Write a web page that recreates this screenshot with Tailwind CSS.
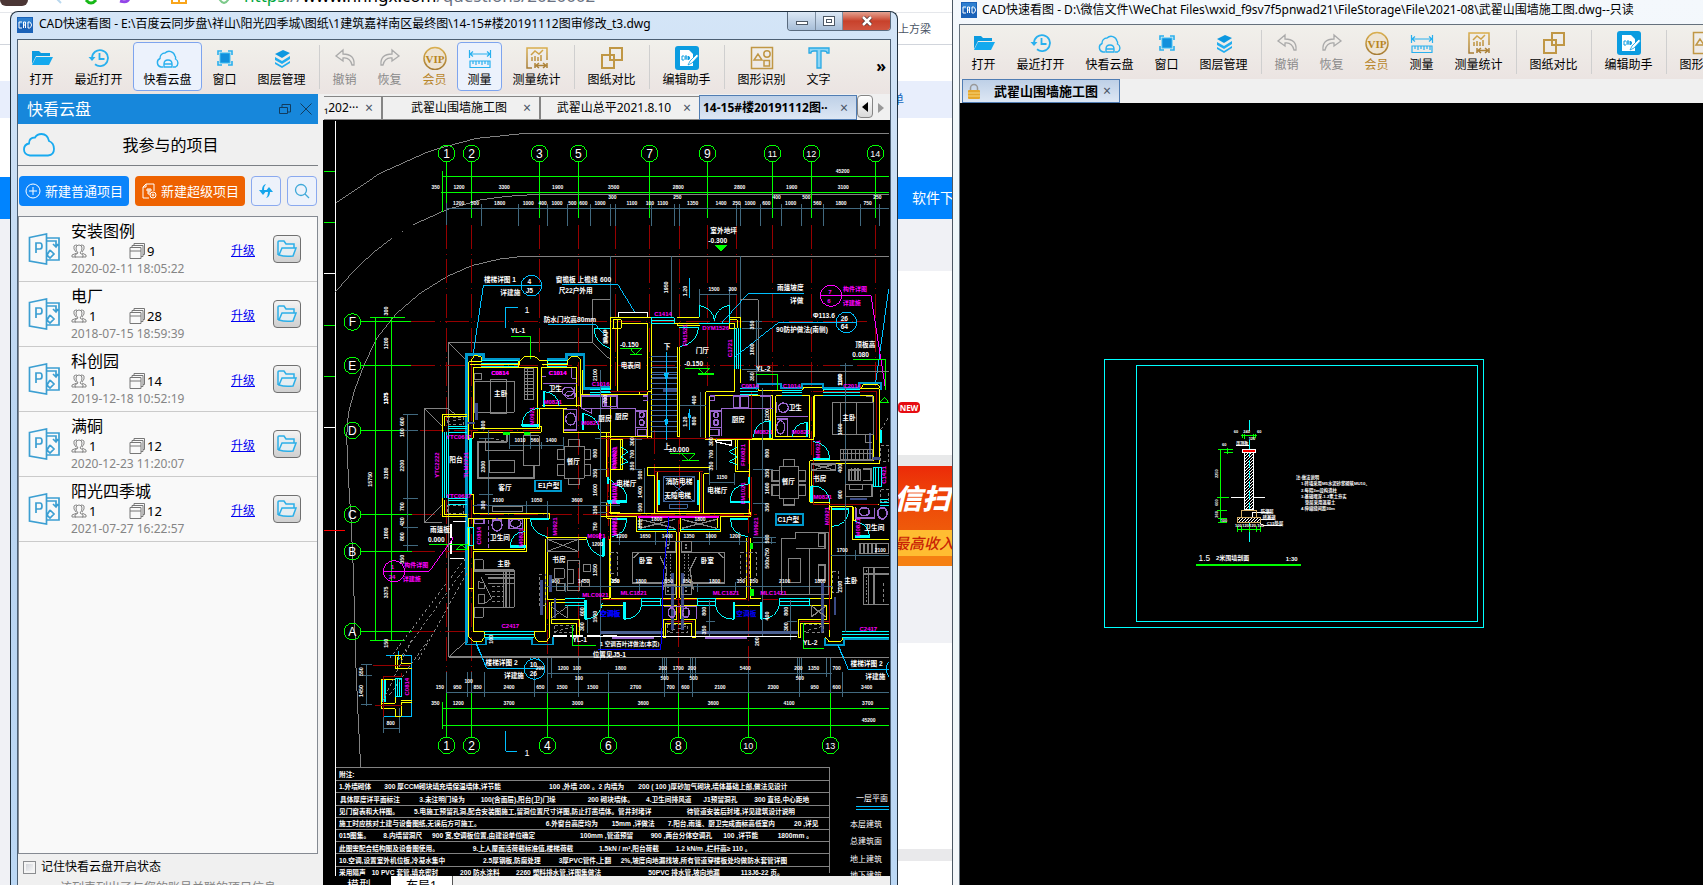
<!DOCTYPE html>
<html lang="zh-CN">
<head>
<meta charset="utf-8">
<title>CAD快速看图</title>
<script src="https://cdn.jsdelivr.net/npm/@tailwindcss/browser@4"></script>
</head>
<body class="relative h-screen overflow-hidden bg-white font-['Noto_Sans','Noto_Sans_CJK_SC',sans-serif] text-xs leading-4 text-black">

<!-- Shared icons -->
<svg class="absolute size-0" aria-hidden="true">
  <defs>
    <linearGradient id="gold" x1="0" y1="0" x2="0" y2="1"><stop offset="0" stop-color="#d9ae4e"/><stop offset="1" stop-color="#a67c35"/></linearGradient>
    <symbol id="i-app" viewBox="0 0 16 16"><rect width="16" height="16" fill="#1a62b8"/><rect x="1" y="1" width="14" height="6" fill="#2d7fd0"/><path d="M5 5H2v6h3M6.500 11V5h2v6M6.500 8h2M11 11V5h1.500q2 1 2 3t-2 3z" fill="none" stroke="#fff"/></symbol>
    <symbol id="i-open" viewBox="0 0 24 24"><path d="M2 18V5h7l2 2h9v3H6z" fill="#0c9be0"/><path d="m6 11h17l-4 8H2z" fill="#14a9ee"/></symbol>
    <symbol id="i-recent" viewBox="0 0 24 24"><path d="M5 12a8 8 0 1 1 3 6.300M12.500 7v6h5" fill="none" stroke="#29b0ee" stroke-width="1.800"/><path d="M1.500 11h7L5 15z" fill="#29b0ee"/></symbol>
    <symbol id="i-cloudp" viewBox="0 0 24 24"><path d="M7 21H5a4.500 4.500 0 0 1-1-8.500 5 5 0 0 1 5-5.500 6 6 0 0 1 10 3q1 1 .500 3a4.500 4.500 0 0 1 0 8h-2.500M8 21v-3q0-4 4-4t4 4v3zM8 18h8" fill="none" stroke="#29b0ee" stroke-width="1.400"/></symbol>
    <symbol id="i-win" viewBox="0 0 24 24"><rect x="7" y="7" width="10" height="10" fill="#1290dc" stroke="#41c0f5"/><path d="M5 9V5h4M15 5h4v4M19 15v4h-4M9 19H5v-4" fill="none" stroke="#29b0ee" stroke-width="1.600"/></symbol>
    <symbol id="i-layer" viewBox="0 0 24 24"><path d="m5 8 8-4 7 3-8 5z" fill="#0c98e0"/><path d="m5 11 7 4 8-5v3l-8 5-7-4zm0 5 7 4 8-5v2l-8 5-7-4z" fill="#21adf0"/></symbol>
    <symbol id="i-undo" viewBox="0 0 24 24"><path d="m10 4-7 6 7 5v-3q7-1 9 7h2q1-11-11-11z" fill="none" stroke="#aaa" stroke-width="1.300"/></symbol>
    <symbol id="i-redo" viewBox="0 0 24 24"><path d="m14 4 7 6-7 5v-3q-7-1-9 7H3q-1-11 11-11z" fill="none" stroke="#aaa" stroke-width="1.300"/></symbol>
    <symbol id="i-vip" viewBox="0 0 24 24"><circle cx="12" cy="12.500" r="11" fill="#eee4d3" stroke="url(#gold)" stroke-width="1.500"/><text x="12" y="16.500" text-anchor="middle" font-family="Liberation Serif" font-weight="bold" font-size="11" fill="#b8851f">VIP</text></symbol>
    <symbol id="i-measure" viewBox="0 0 24 24"><path d="M1.500 4v8M22.500 4v8M2 8h20M5 5.500 2 8l3 2.500M19 5.500 22 8l-3 2.500M2 15h20v6.500H2zM5 15v3M8 15v4M11 15v3M14 15v4M17 15v3M20 15v4" fill="none" stroke="#29b0ee" stroke-width="1.200"/></symbol>
    <symbol id="i-stat" viewBox="0 0 24 24"><path d="M7 22H2V2h20v12M6 9l4-4 4 3 4-4M7 15v-4M10 15v-5M13 15v-4M16 15V9M10 17v5M22 17v5M11 19.500h10M14 17l-3 2.500L14 22M18 17l3 2.500L18 22" fill="none" stroke="url(#gold)" stroke-width="1.500"/></symbol>
    <symbol id="i-cmp" viewBox="0 0 24 24"><path d="M10 2h12v12H10zM2 9h12v13H2z" fill="none" stroke="#c09745" stroke-width="2"/></symbol>
    <symbol id="i-edit" viewBox="0 0 24 24"><rect width="24" height="24" rx="3" fill="#0b9ce0"/><path d="M5 4h9l4 4v12H5z" fill="#fff"/><path d="M9 10H7v4h2M10 14v-4h2v4M10 12h2M13.500 10v4q2.500-2 0-4" fill="none" stroke="#0b9ce0"/><path d="m13 19 2-4 7-7 1.500 2-6.500 7z" fill="#fff" stroke="#0b9ce0" stroke-width=".8"/></symbol>
    <symbol id="i-shape" viewBox="0 0 24 24"><path d="M1.500 1.500h21v21h-21zM8 8l-4 6h8zM14 14.500h5.500V20H14z" fill="none" stroke="#c09745" stroke-width="1.500"/><circle cx="17" cy="8" r="3.200" fill="none" stroke="#c09745" stroke-width="1.500"/></symbol>
    <symbol id="i-text" viewBox="0 0 24 24"><path d="M2 2h20v5h-2q0-2-3-2h-3v17h-4V5H7Q4 5 4 7H2z" fill="#8dd5f5" stroke="#29a9e4" stroke-width="1.300"/></symbol>
    <symbol id="i-proj" viewBox="0 0 32 32"><path d="M19 5h12v22H19M1.500 4.500 18.500 1v30L1.500 28zM8 20V10h4q2 0 2 3t-2 3H8M19 8h9v6m-3-3 3 3 2-3M22 17l4 4-4 4-3-3 3-5" fill="none" stroke="#3c9fd2" stroke-width="1.700"/></symbol>
    <symbol id="i-people" viewBox="0 0 16 14"><path d="M6 9 1 11v2h4M5 8Q2 5 3 2q1-1 3-1M11 9l4 2v2h-4M11 8q3-3 2-6-1-1-3-1M8 1q-3 0-3 3t2 5l-3 2v2h8v-2L9 9q2-2 2-5T8 1z" fill="none" stroke="#858585"/></symbol>
    <symbol id="i-docs" viewBox="0 0 16 16"><path d="M1 4.500h11v11H1zM1 8h11M3 4V2.500h11v11h-2M5 2V.500h10.500v11H14" fill="none" stroke="#777"/></symbol>
    <symbol id="i-folder" viewBox="0 0 20 18"><path d="M1 15V2q0-1 1-1h5l2 3h8v4M5 8h14l-3 8q-8 1-14-1z" fill="#e6eef2" stroke="#2cafe8" stroke-width="1.500"/></symbol>
  </defs>
</svg>

<!-- Browser page behind both windows -->
<div class="absolute inset-0 flex flex-col" aria-label="浏览器">
  <div class="flex h-[13px] shrink-0 items-start gap-5 overflow-hidden border-b border-gray-200 bg-white">
    <span class="h-1.5 w-7 rounded-b-full bg-[#4b3635]"></span>
    <svg class="ml-1 h-1.5 w-24 shrink-0" viewBox="0 0 96 6"><path d="M3-3l6 6" stroke="#b9d8ef" stroke-width="2"/><path d="M34 0q5 6 10 0" fill="none" stroke="#17b817" stroke-width="3"/><path d="M68 1q10 3 9-6" fill="none" stroke="#9345e8" stroke-width="3"/></svg>
    <svg class="-ml-2 h-1.5 w-8 shrink-0" viewBox="0 0 32 6"><path d="M12 0v3h14V0M19 0v3" fill="none" stroke="#f9a51b" stroke-width="2"/></svg>
    <svg class="-mr-4 h-1.5 w-6 shrink-0" viewBox="0 0 24 6"><path d="M6-4q2 6 6 7 4-1 6-7" fill="none" stroke="#7cc98a" stroke-width="2"/></svg>
    <span class="-mt-3 ml-1 text-[17px] leading-4 text-gray-500"><span class="text-green-600">https</span>://<span class="text-black">www.hnngx.com</span>/questions/2020002</span>
  </div>
  <div class="flex h-8 shrink-0 items-center border-b border-gray-300 bg-white pl-[898px] text-[11px] text-gray-600">上方梁</div>
  <div class="h-9 shrink-0"></div>
  <div class="flex h-[37px] shrink-0 items-center bg-[#e8eefc] pl-[892px] text-[#1667bd]">单</div>
  <div class="h-[59px] shrink-0"></div>
  <div class="flex h-[42px] shrink-0 items-center bg-[#0084ff] pl-[912px] text-sm text-white">软件下</div>
  <div class="flex min-h-0 flex-1 bg-[#f0f1f5] pl-[898px]">
    <div class="flex w-14 flex-col">
      <div class="h-[52px] shrink-0"></div>
      <div class="flex h-[184px] shrink-0 items-end bg-white pb-[42px]"><span class="h-[11px] w-[22px] rounded-sm bg-[#e60c12] text-center text-[8px] leading-[11px] font-bold text-white">NEW</span></div>
      <div class="h-[11px] shrink-0 bg-[#e8e9ea]"></div>
      <div class="flex h-16 shrink-0 items-center overflow-hidden whitespace-nowrap bg-linear-to-b from-[#ec2a08] to-[#ef5a0a] text-[28px] leading-8 font-black text-white italic"><span class="-ml-1">信扫</span></div>
      <div class="flex h-[26px] shrink-0 items-center overflow-hidden whitespace-nowrap bg-[#ffbd32] text-[15px] font-medium text-[#c92305] italic"><span class="-ml-1">最高收入</span></div>
      <div class="h-[10px] shrink-0 bg-[#f58012]"></div>
      <div class="h-[77px] shrink-0"></div>
      <div class="h-[206px] shrink-0 bg-white"></div>
      <div class="h-3 shrink-0 bg-[#e9e9eb]"></div>
      <div class="flex-1 bg-white"></div>
    </div>
  </div>
</div>

<!-- Left application window -->
<main class="absolute top-[11px] bottom-0 left-[10px] flex w-[888px] flex-col rounded-t-lg border-x border-t border-[#20303f] bg-linear-to-b from-[#d4e5f7] via-[#b9d4f1] to-[#bcd8f5] px-[6px]">
  <header class="flex h-[27px] shrink-0 items-start">
    <svg class="mt-[5px] size-4 shrink-0"><use href="#i-app"/></svg>
    <h1 class="ml-[6px] mt-1 min-w-0 flex-1 truncate leading-4">CAD快速看图 - E:\百度云同步盘\祥山\阳光四季城\图纸\1建筑嘉祥南区最终图\14-15#楼20191112图审修改_t3.dwg</h1>
    <div class="flex h-[19px] overflow-hidden rounded-b border-x border-b border-[#5a6b7e]">
      <button aria-label="最小化" class="flex w-7 items-center justify-center border-r border-[#7d8ea1] bg-linear-to-b from-[#dce8f5] to-[#a7bed8]"><span class="mt-1 h-1 w-3 border border-[#4d5865] bg-white"></span></button>
      <button aria-label="最大化" class="flex w-[27px] items-center justify-center border-r border-[#7d8ea1] bg-linear-to-b from-[#dce8f5] to-[#a7bed8]"><span class="flex h-[10px] w-3 items-center justify-center border border-[#4d5865] bg-white"><span class="h-1 w-1.5 border border-[#4d5865]"></span></span></button>
      <button aria-label="关闭" class="flex w-[47px] items-center justify-center bg-linear-to-b from-[#e2a191] via-[#c8412b] to-[#d0543f]"><svg class="h-[10px] w-3" viewBox="0 0 12 10"><path d="m2 1 8 8M10 1 2 9" stroke="#4b3030" stroke-width="4"/><path d="m2 1 8 8M10 1 2 9" stroke="#fff" stroke-width="2.500"/></svg></button>
    </div>
  </header>
  <div class="flex min-h-0 flex-1 flex-col border border-b-0 border-[#4c5f73] bg-[#f0f0f0]">
    <nav data-toolbar="left" class="flex h-[54px] shrink-0 items-start overflow-hidden bg-linear-to-b from-[#f1f0eb] to-[#ebe4e2] pl-px pt-0.5"></nav>
    <div class="flex min-h-0 flex-1">

      <!-- Cloud disk panel -->
      <aside class="flex w-[300px] shrink-0 flex-col overflow-hidden">
        <div class="flex h-[30px] shrink-0 items-center bg-[#1787db] pl-[9px] pr-[6px] text-base text-white">
          <h2 class="flex-1">快看云盘</h2>
          <button aria-label="浮动" class="mr-[9px]"><svg class="size-3" viewBox="0 0 12 12"><path d="M.5 4.500h8v6h-8zM3 4V1.500h8.500V9H9" fill="none" stroke="#123c5e"/></svg></button>
          <button aria-label="关闭面板"><svg class="size-3" viewBox="0 0 12 12"><path d="m.5.5 11 11m0-11-11 11" stroke="#123c5e"/></svg></button>
        </div>
        <div class="flex h-[42px] shrink-0 items-center border-b border-[#7b7f84] pl-[5px]">
          <svg class="h-6 w-8" viewBox="0 0 32 24"><path d="M7 22.500q-6-1-6-6t5-6q0-6 6-6 2-3.500 6.500-3.500 6 0 7.500 7 5 2 5 8 0 6-6 6.500z" fill="none" stroke="#18aaf0" stroke-width="1.800"/></svg>
          <span class="flex-1 pr-[32px] text-center text-base">我参与的项目</span>
        </div>
        <div class="flex shrink-0 gap-[6px] px-px py-[10px]">
          <button class="flex h-[30px] w-[110px] items-center justify-center gap-1 rounded bg-[#0b84fa] text-[13px] text-white"><svg class="size-4" viewBox="0 0 16 16"><circle cx="8" cy="8" r="7" fill="none" stroke="#fff"/><path d="M8 4v8M4 8h8" stroke="#fff"/></svg>新建普通项目</button>
          <button class="flex h-[30px] w-[110px] items-center justify-center gap-1 rounded bg-[#ee6200] text-[13px] text-white"><svg class="size-4" viewBox="0 0 16 16"><path d="M13 8V1H5L2 4v11h6M5 1v3H2M6 6h4v2H6zM6 10h2M8 6v6" fill="none" stroke="#fff"/><circle cx="12" cy="12" r="3" fill="none" stroke="#fff"/><path d="M12 10.500v3M10.500 12h3" stroke="#fff"/></svg>新建超级项目</button>
          <button aria-label="刷新" class="flex size-[30px] items-center justify-center rounded border border-[#8aa9ef] bg-[#edf2fb]"><svg class="size-4" viewBox="0 0 16 16"><path d="M8 1Q4 2 4 7H1l4 5 4-5H6q0-4 2-6zM8 15q4-1 4-6h3l-4-5-4 5h3q0 4-2 6z" fill="#15a6ec"/></svg></button>
          <button aria-label="搜索" class="flex size-[30px] items-center justify-center rounded border border-[#8aa9ef] bg-[#edf2fb]"><svg class="size-4" viewBox="0 0 16 16"><circle cx="7" cy="7" r="5.500" fill="none" stroke="#3fa8d8" stroke-width="1.300"/><path d="m11 11 4 4" stroke="#3fa8d8" stroke-width="1.300"/></svg></button>
        </div>
        <ul id="projects" class="min-h-0 flex-1 overflow-hidden border border-[#858a92] bg-[#f9f9f9]"></ul>
        <div class="h-[31px] shrink-0 overflow-hidden">
          <label class="flex h-[26px] items-center gap-[5px] pl-[5px]"><input type="checkbox" class="size-[13px] appearance-none border border-[#8b8d90] bg-linear-to-br from-[#c9ccd2] to-white shadow-[inset_0_0_0_2px_#f4f4f4]">记住快看云盘开启状态</label>
          <p class="pl-[42px] text-[#848484]">该列表列出了与您的账号关联的项目信息</p>
        </div>
      </aside>

      <!-- Drawing area -->
      <section class="flex min-w-0 flex-1 flex-col pl-[5px]">
        <div role="tablist" class="flex h-[26px] shrink-0 items-stretch overflow-hidden pt-px pl-px">
          <button role="tab" class="mt-px flex w-[59px] items-center justify-between border-t border-r-2 border-b border-[#858585] pr-2"><span>₁202···</span><span class="text-sm text-gray-600">×</span></button>
          <button role="tab" class="mt-px flex w-[158px] items-center border-t border-r-2 border-b border-[#858585] pr-2 pl-3"><span class="flex-1">武翟山围墙施工图</span><span class="text-sm text-gray-600">×</span></button>
          <button role="tab" class="mt-px flex w-[158px] items-center border-t border-b border-[#858585] pr-2 pl-1"><span class="flex-1">武翟山总平2021.8.10</span><span class="text-sm text-gray-600">×</span></button>
          <button role="tab" aria-selected="true" class="flex w-[158px] items-center border border-[#517db3] bg-linear-to-b from-[#bed0e7] to-[#dde7f4] pr-2 pl-[3px]"><span class="flex-1 whitespace-nowrap text-left font-bold">14-15#楼20191112图··</span><span class="text-sm text-gray-600">×</span></button>
          <button aria-label="上一个" class="mb-0.5 flex w-4 items-center justify-center rounded border border-[#858585] bg-linear-to-b from-white to-[#d9d9d9]"><svg class="h-2.5 w-1.5" viewBox="0 0 6 10"><path d="M6 0v10L0 5z"/></svg></button>
          <button aria-label="下一个" class="flex w-4 items-center justify-center"><svg class="h-2.5 w-1.5" viewBox="0 0 6 10"><path d="M0 0v10l6-5z" fill="#999"/></svg></button>
        </div>
        <div class="min-h-0 flex-1 overflow-hidden bg-black">
<svg id="plan" class="h-[756px] w-[566px]" viewBox="323 120 566 756" fill="none" shape-rendering="crispEdges">
<!-- Each block is drawn in thirds of a pixel -->
<g transform="translate(320 120) scale(.333333)" stroke-width="3">
 <path stroke="#fff" d="M47 3V2268M12 460H46M12 922H46"/>
 <path stroke="#828282" d="M47 249 180 160 325 95 380 79 470 55 608 41H1707M47 515 95 460 155 402 215 355M246 334h3M280 314 380 269 480 240 560 229 650 223H1707M610 409H1707M610 409 540 417 455 437 380 470 300 520 230 580 170 655 130 740 104 810 85 880 80 950 85 1070 93 1200 100 1350 107 1620 113 1760 122 1944M385 1610V668H817V539H872M385 668 437 718M817 668 872 720"/>
 <path stroke="#960000" stroke-dasharray="72 14 3 14" d="M380 315V1700M455 315V1700M658 315V700M775 315V1700M887 315V830M989 315V720M1078 315V1480M1162 315V830M1249 315V600M1357 315V950M1474 315V1150M1666 315V830M273 604H1640M273 736H1690M300 931H660M273 1184H1310M273 1294H470M273 1534H470M1003 930V1130M1075 1200V1660M1285 960V1660M865 940V1260M682 1220V1660"/>
 <path stroke="#0f0" d="M12 154H46M12 307H46M12 616H46M12 769H46M380 125V293M455 125V293M658 125V293M775 125V293M989 125V293M1162 125V293M1357 125V293M1474 125V293M1666 125V293M367 152V275M367 169H1707M362 217H1707M122 604H273M122 736H273M150 592H255M167 592V1561M214 592V1561M122 931H275M122 1184H275M122 1294H275M122 1534H275M150 1561H255M573 649H631V717"/>
 <g stroke="#0f0"><circle cx="380" cy="100" r="25"/><circle cx="455" cy="100" r="25"/><circle cx="658" cy="100" r="25"/><circle cx="775" cy="100" r="25"/><circle cx="989" cy="100" r="25"/><circle cx="1162" cy="100" r="25"/><circle cx="1357" cy="100" r="25"/><circle cx="1474" cy="100" r="25"/><circle cx="1666" cy="100" r="25"/><circle cx="97" cy="606" r="25"/><circle cx="97" cy="736" r="25"/><circle cx="97" cy="931" r="25"/><circle cx="97" cy="1184" r="25"/><circle cx="97" cy="1295" r="25"/><circle cx="97" cy="1535" r="25"/></g>
 <path stroke="#f00" d="M12 1231H75"/>
 <path stroke="#41697f" d="M380 265H1707M380 250V315M484 252V317M595 252V317M682 252V317M742 252V317M811 252V317M871 252V317M886 252V317M994 252V317M1063 252V317M1078 252V317M1249 252V317M1261 252V317M1321 252V317M1384 252V317M1444 252V317M1510 252V317M1621 252V317M1678 252V317M872 409V592M1261 409V592M1054 409V592M1138 508V592M1228 508V592M1136 523H1250"/>
 <path stroke="#00bfff" d="M460 700 490 497H665M557 623V562H593M726 493H893L945 577M684 613H825L860 650M603 497a31 31 0 1 0 62 0 31 31 0 1 0-62 0"/>
 <path stroke="#09c" stroke-width="8" d="M439 1570V703H490V718H600M680 718H740V703H792V805H870"/>
 <path stroke="#ff0" d="M447 960V725H485V712L475 708H462L452 725M460 925V742H652V925M665 810V742H770V860M450 735H600V722L612 710H645L660 722H682M665 735H742V722L755 710H775L783 722V860M595 742V722M682 742V722"/>
 <path stroke="#0ff" d="M484 721H595M484 731H595M484 740H595M682 721H742M682 731H742M682 740H742M822 627H870M822 627Q825 670 870 685M872 627V685"/>
 <path stroke="#838383" d="M463 760H484V780H463ZM463 784H583V877H463ZM511 780V880H560V780ZM613 745H640V840H613ZM622 745V840M613 755H640M613 765H640M613 775H640M613 785H640M613 795H640M613 805H640M613 815H640M613 825H640"/>
 <path stroke="#96c" d="M668 790H770M755 745V775H768M735 825a16 12 0 1 1 32 0 16 12 0 1 1-32 0M665 770H678"/>
</g>

<g transform="translate(600 120) scale(.333333)" stroke-width="3">
 <path stroke="#ff0" d="M31 810V594H154V610H232V618H300M232 592H298M388 592H421V625M403 625V610H232M403 748V810M421 748V790M142 810V610H64M64 600V625H35M154 810V610M52 600V810M232 680V810M239 680V810M64 610V600H40V625M388 600H412V625H388V600"/>
 <path stroke="#fff" d="M55 592V577H143V592"/>
 <path stroke="#0ff" d="M154 594H223V610H154ZM154 602H223M298 610H388M298 592V556Q340 565 343 602Q346 565 388 556V610M236 622H296Q292 670 240 680M403 625V748M409 625V748M415 625V748M421 625V748"/>
 <path stroke="#41699f" d="M154 709H232M154 726H232M154 742H232M154 758H232M154 774H232M154 790H232M154 805H232"/>
 <path stroke="#00bfff" d="M199 695V810M268 475V535M364 610 445 520H612M406 710 536 607H770M866 507 826 795M708 607a31 31 0 1 0 62 0 31 31 0 1 0-62 0"/>
 <path stroke="#f0f" d="M661 527H813L857 810M661 527a32 32 0 1 0 64 0 32 32 0 1 0-64 0"/>
 <path stroke="#828282" d="M421 539H475V754H867"/>
 <path stroke="#41697f" d="M425 604H485M425 625H485M470 600V810M425 748H485M737 730V810M720 737H760"/>
 <path stroke="#0f0" d="M60 685H127M90 685 106 703 124 685M90 703H125M255 745H330M295 745 312 762 328 745M295 762H342M468 763H532V810M759 718H857V810"/>
 <path fill="#0f0" d="M343 375H384L363 396Z"/>
</g>

<g transform="translate(320 370) scale(.333333)" stroke-width="3">
 <path stroke="#ff0" d="M447 187V205H460V187H664V169H652M460 176H658V115H740M665 108H783M731 115V188H788M783 75H872M783 108V75M788 187H860V320M872 75V205H900M872 210V298H900M367 187V133H442M373 168V139H442M367 385V440H442M373 391V433H442M447 373H460V430H689V445H447V790M460 445V540H614V445M620 445V545H460V784H677V508M682 502V690H736M677 502H800V508H682M870 508V685H848M850 706H900M694 697V748H780V800H770V760H694V697H736M447 655H460M788 0V75M860 400V445H900M866 427H900M447 784V800L458 814H485L495 800V784M643 784V800L655 814H680L690 800V697"/>
 <path stroke="#0ff" d="M367 187V385M373 187V385M379 187V385M385 187V385M385 169H442M385 177H442M385 187H442M385 385H442M385 393H442M385 403H442M442 472V526H460V472ZM450 472V526M493 784H643M493 793H643M493 802H643M736 685H795M736 697H795M736 706H795M811 60H872M811 67H872M811 75H872M658 114Q610 118 605 167M630 445Q635 490 680 500M570 530Q575 485 614 485M670 64Q715 70 718 108M790 130Q835 140 838 181M800 508Q810 550 850 560M795 748Q840 745 847 700M865 325Q880 330 885 345"/>
 <path stroke="#0ff" stroke-width="7" d="M452 205V373M605 167H658M672 64V110M790 130V181M570 530H617M630 447H688M850 508V560M797 690V748M863 400H900"/>
 <path stroke="#09c" stroke-width="5" d="M438 820V824H498V808H637V824H700V800M646 332H724V364H646Z"/>
 <path stroke="#41697f" d="M263 133V544M250 133H294M250 183H294M250 385H294M250 472H294M250 526H294M505 181V434M478 205H518M478 373H518M568 226H730M568 190V238M631 190V238M664 215V238M730 200V238M460 407H900M620 393V430M682 393V445M842 80V800M682 650H870M736 640V665M826 205H860M826 298H860M826 427H860M802 748V790"/>
 <path stroke="#3b4b86" stroke-width="7" d="M470 98V150M440 160H465M470 405H500M692 615V665M706 685V745M665 630V735"/>
 <path stroke="#828282" d="M610 198H658V287H610ZM497 205V243H610M508 272H584V307H508ZM733 229H793V325H733ZM745 229V208H778V229M745 325V345H778V325M733 238H712V270H733M733 285H712V318H733M793 238H812V270H793M793 285H812V318H793M463 600H583V712H463M463 570H490V600H463ZM463 712H490V742H463ZM495 615H583M505 640H583M552 600V712M568 600V712M483 620 515 685 495 700M475 635V655H495V640ZM475 675V700H495V675ZM682 508H775V544H682ZM682 508 775 544M682 544 775 508M742 571H780V663H742ZM742 598H761V640H742M790 583H812V605H790ZM785 630H810V650H785ZM703 597H733V625H703ZM710 640H735V662H710ZM313 115H367M313 115V458H367M313 115 367 168M313 458 367 405M348 115H385L405 133M694 710 742 745M694 745 742 710M742 706V745M517 410H608V425H517ZM387 860H900M387 860 437 815"/>
 <path stroke="#828282" stroke-width="6" d="M560 217V190M560 217H475V325H641V287M557 602V712M463 604H583M505 625H583"/>
 <path stroke="#828282" stroke-dasharray="9 7" d="M382 142H432V165H382ZM382 408H432V431H382ZM437 565 205 870M437 590 235 870M440 610 295 870M658 613H677V706H658ZM705 766H760V788H705ZM872 547H893V612H872ZM512 205 560 215M382 155 432 145M705 785 760 770M515 650H550M515 665H550M515 680H550M515 695H550"/>
 <path stroke="#fff" stroke-width="4" d="M398 455H440M393 463V565H440M700 798H900" stroke-dasharray="40 10"/>
 <path stroke="#0f0" d="M327 523H442V540H407L425 525 440 540M757 766V826H828"/>
 <path fill="#0f0" d="M550 187h20v9h-20zM613 187h18v9h-18z"/>
 <path stroke="#f0f" d="M190 604H328L397 508V500M190 604a32 32 0 1 0 64 0 32 32 0 1 0-64 0"/>
 <path stroke="#96c" stroke-width="4" d="M726 65a18 13 0 1 1 36 0 18 13 0 1 1-36 0M764 50V80M731 118H770V180H731M737 147a15 18 0 1 1 30 0 15 18 0 1 1-30 0M785 78H893V115H785ZM855 80V110H890V80M785 115 815 130V115M516 465a15 18 0 1 1 30 0 15 18 0 1 1-30 0M516 450H546M567 448H608V475H567ZM571 460a16 12 0 1 1 32 0 16 12 0 1 1-32 0M463 448H492V460H463Z"/>
 <path stroke="#96c" stroke-dasharray="12 6" d="M668 40H770M505 450V540"/>
 <path stroke="#00f" d="M834 838H900"/>
 <path stroke="#00bfff" d="M468 815 500 895M200 858H275M235 845V870M630 870a14 8 0 0 1 28 0"/>
</g>

<g transform="translate(600 370) scale(.333333)" stroke-width="3">
 <path stroke="#ff0" d="M0 75H142V205H154V0M142 75V65H154M0 187H31V210H68V300H31V430H165V318H142V293H329V312H311V430H450V210H406V304H450M62 210V300M412 210V300M31 205H155V200H0M232 0V199H239V0M52 0V65H118V75M317 210V65H404V0M329 200V77H518V205H317M317 210H640V77M512 200V77M527 200V77H629V205M527 200H622M643 200V77H820V272H629V397H690V410H760V452M635 397V282H838V57H780M174 305H299V426H174ZM0 440H110V485H229V685H33V445M239 685V485H361V440H445M242 440V485M118 445V475M353 445V475M31 505V685M439 505V685H240M451 505V685H482M0 706H74M180 706H230V748H190V802H198V760H276V802H287V748H242V706H292M400 706H484M630 685H696V410M628 706H680V748H595V802H603V760H690V800M690 412V505M757 412V508H867M766 412V452H757M445 440H451V427M475 52V62H545M605 62 612 52H665L672 62M780 57 790 45H835L843 57M675 800 687 815H722L732 800M690 404H838M155 430H311"/>
 <path stroke="#900" d="M25 65H145M0 205H455V65M165 306H310M22 210V437H455V320M170 310V425M305 310V425M0 690H120M185 690H290M345 690H440M490 690H535M235 485V802M445 500V690M640 65H830V210M640 210V405H835M690 420V780M600 755H690M200 755H280"/>
 <path stroke="#0ff" d="M0 55H31M0 65H31M421 57H475M421 65H475M421 75H475M545 62H605M545 69H605M545 77H605M670 60H780M670 68H780M670 76H780M124 685H182V706H124ZM124 695H182M292 685H347V706H292ZM292 695H347M538 685H629V706H538ZM538 695H629M727 785H867M727 793H867M727 802H867M820 293V350H845V293ZM828 293V350M836 293V350M115 480H229M242 480H361M80 395Q85 345 35 343M391 395Q390 345 443 343M80 447Q78 495 35 500M391 447Q393 495 445 500M460 200Q465 155 511 152M577 200Q580 160 622 157M640 215Q685 220 689 265M635 347Q685 350 690 397M747 418Q745 465 695 470M766 455Q805 460 809 500M72 748Q120 745 124 706M403 748Q350 745 347 706M484 748Q530 745 538 706M62 230 85 245 62 260 85 275 62 285M412 230 388 245 412 260 388 275 412 285M840 390H867M840 398H867M840 407H867"/>
 <path stroke="#0ff" stroke-width="7" d="M178 330V405M295 330V405M20 395H80M391 397H451M35 447H80M391 447H445M511 152V205M622 157V200M640 267H689M635 347V397M695 418H747M766 500H809M74 695V748M403 695V748M484 695V748M12 505V558M25 320V342M447 320V342M843 180V220"/>
 <path stroke="#09c" stroke-width="6" d="M425 55H475V43H543V55H605V43H670V55H776V40H843V60M0 50H30M527 433H608V466H527ZM675 805V824H732V806H867"/>
 <path stroke="#41699f" d="M154 12H232M154 27H232M154 42H232M154 57H232M154 73H232M154 90H232M154 106H232M154 122H232M154 138H232M154 154H232M154 170H232M154 186H232M190 319H283V395H190ZM190 319 283 395M190 395 283 319M208 403H262V415H208Z"/>
 <path stroke="#41697f" d="M488 55V800M737 0V785M0 398H25M0 407H25M108 205V300M133 295V430M350 205V300M0 650H695M33 514H445M60 485V525M168 485V525M210 485V525M330 485V525M418 485V525M120 635V665M293 635V665M408 635V665M628 635V665M240 106H318M302 65V200M328 338H405M328 295V345M405 310V345M460 298H520M460 402H505M460 502H527M460 517H527M515 500V522M693 556H867M767 540V570M572 690V810M330 690V800M318 755H345M560 755H590M93 210H125M93 298H125M0 0V870"/>
 <path stroke="#3b4b86" stroke-width="8" d="M217 610V780M248 610V780M668 640V790M810 190V270M705 680V735M750 387H800M190 62H230M820 265H840"/>
 <path stroke="#828282" stroke-width="4" d="M98 547H229M98 547V639H200M242 547H373V639H270M98 565 118 547M373 565 353 547M180 560 200 600 190 660M290 560 270 600 280 660M196 515H226V545H196ZM245 515H275V545H245ZM196 645H226V673H196ZM245 645H275V673H245ZM120 448 225 475M120 475 225 448M245 448 350 475M245 475 350 448M538 289H596V385H538ZM550 289V269H584V289M550 385V405H584V385M538 301H516V333H538M538 345H516V377H538M596 301H616V333H596M596 345H616V377H596M587 487H686V673H545V505H587ZM587 535H675V510M628 535V673M565 565H602V637H565ZM655 490H675V530H655ZM655 585H675V630H655ZM697 98H820V194H697ZM721 98V194M770 98V194M797 80H817V98M797 194V217H817M722 238H818V270H722ZM730 240V270M742 240V270M754 240V270M766 240V270M778 240V270M790 240V270M802 240V270M722 250H818M635 282H706V301H635ZM635 282 706 301M635 301 706 282M747 300H782V332H747ZM755 293V332M765 293V332M774 293V332M790 297H813V332H790M737 343H816V380H737ZM748 343V358H787V343M635 708 677 740M635 740 677 708M635 706V740M790 592V703H867M790 592H867M806 592V703M822 592V703M790 612H867M780 520H867V550H780ZM792 520V550M804 520V550M816 520V550M828 520V550"/>
 <path stroke="#828282" stroke-width="5" stroke-dasharray="5 5" d="M200 552V640M212 552V640M254 552V640M266 552V640M204 522V545M258 522V545M204 650V670M258 650V670M800 590V700"/>
 <path stroke="#828282" stroke-dasharray="9 7" d="M33 547H52V625H33ZM422 547H441V625H422ZM450 547H469V625H450ZM202 765H264V787H202ZM610 765H672V787H610ZM698 604H716V668H698ZM842 228H866V275H842ZM842 360H866V395H842ZM825 630V700M850 640V700M202 785 264 768M610 785 672 768M842 180 867 140"/>
 <path stroke="#96c" stroke-width="4" d="M8 80H52V110H8ZM20 80V110M0 115H107V198M107 123H140V172H107ZM112 178H140V197H112ZM130 78H142V92H130M329 78H343V92H329M331 123H365V172H331ZM331 178H357V197H331M365 198V115H518M401 78H446V112H401ZM420 78V112M479 78H512V115M530 97V130M535 113a15 14 0 1 1 30 0 15 14 0 1 1-30 0M530 147H562L562 197M530 172a12 20 0 1 1 24 0 12 20 0 1 1-24 0M527 139H625"/>
 <path stroke="#96c" stroke-width="5" d="M118 135a7 8 0 1 1 14 0 7 8 0 1 1-14 0M118 158a7 8 0 1 1 14 0 7 8 0 1 1-14 0M341 135a7 8 0 1 1 14 0 7 8 0 1 1-14 0M341 158a7 8 0 1 1 14 0 7 8 0 1 1-14 0M768 415V445H824V415M778 425a15 12 0 1 1 30 0 15 12 0 1 1-30 0M833 430a14 17 0 1 1 28 0 14 17 0 1 1-28 0M192 710H290V748M205 728a10 14 0 1 1 20 0 10 14 0 1 1-20 0M248 728a10 14 0 1 1 20 0 10 14 0 1 1-20 0M36 804H162M315 804H442"/>
 <path stroke="#fff" d="M345 212H395V226L345 215M0 800H590" stroke-width="4"/>
 <path stroke="#4a5f90" stroke-width="7" d="M0 788H188M288 788H595"/>
 <path stroke="#f0f" stroke-width="6" d="M113 440H358M0 490V507"/>
 <path stroke="#00f" d="M207 440 199 520 188 640 187 760 182 838H0"/>
 <path stroke="#0f0" d="M210 252H285L266 271 245 252M245 271H297M294 12H342M468 13H533V55M610 760V835H671M840 98H867L853 82 840 98"/>
 <path fill="#0f0" d="M450 520h9v16h-9zM450 658h12v20h-12z"/>
 <path stroke="#00bfff" d="M199 0V210M268 118V180M713 825 733 870"/>
 <path stroke="#00bfff" fill="#00bfff" d="M199 30 193 10H205ZM199 170 194 150H204ZM268 125 264 143H272Z"/>
 <path stroke="#828282" d="M0 862H867M440 3H867"/>
</g>

<g transform="translate(320 640) scale(.333333)" stroke-width="3">
 <path stroke="#828282" d="M47 384H1529V700M47 421H1529M47 457H1529M47 496H1529M47 532H1529M47 568H1529M47 606H1529M47 642H1529M47 679H1529M387 52H1707"/>
 <path stroke="#41697f" d="M380 157H1707M680 100H1535M380 96V170M443 96V170M455 96V170M493 96V170M643 96V170M682 55V170M694 55V113M775 55V170M865 96V170M1033 55V170M1075 90V170M1117 55V170M1285 90V170M1438 55V170M1531 55V170M1567 96V170M1027 55V110M1039 55V110M1111 55V110M1126 55V110M1432 55V110M1444 55V110M1519 55V110M140 75V198M122 75H155M122 108H155M122 195H155M190 205V280M238 205V280M190 265H238"/>
 <path stroke="#0f0" d="M367 187V268M367 205H1707M367 256H1707M380 160V291M455 160V291M682 160V291M865 160V291M1075 160V291M1285 160V291M1531 160V291"/>
 <g stroke="#0f0"><circle cx="380" cy="316" r="25"/><circle cx="455" cy="316" r="25"/><circle cx="682" cy="316" r="25"/><circle cx="865" cy="316" r="25"/><circle cx="1075" cy="316" r="25"/><circle cx="1285" cy="316" r="25"/><circle cx="1531" cy="316" r="25"/></g>
 <path stroke="#00bfff" d="M468 12 500 85H675M613 87a31 31 0 1 0 62 0 31 31 0 1 0-62 0M557 272V334H591M198 46H275V229H190M235 33V60M1555 15 1585 88H1707M1707 65Q1690 87 1707 110M1608 499H1707M1608 508H1707"/>
 <path stroke="#ff0" d="M226 118H184V206H226V229H244V187H275M184 190H226V120M244 181H275M226 46V85H275M244 46V70H275M226 46H244M232 50V85H245"/>
 <path stroke="#0ff" d="M226 115V170H244V115ZM232 115V170M238 115V170"/>
 <path stroke="#0ff" stroke-width="12" d="M191 120V185"/>
 <path stroke="#960000" d="M160 76H270M165 196H245M190 109H245V100M190 109V230"/>
 <path stroke="#828282" stroke-dasharray="9 7" d="M275 0 190 180M325 0 205 170"/>
</g>
</svg>
        </div>
        <div role="tablist" class="flex h-[9px] shrink-0 overflow-hidden bg-[#f0f0f0] text-xs leading-4">
          <button role="tab" class="h-4 w-[68px] bg-black pt-0.5 pl-1 leading-4 text-white">模型</button>
          <button role="tab" class="h-4 w-[62px] border-r border-[#555] bg-white pt-0.5 leading-4">布局1</button>
        </div>
      </section>
    </div>
  </div>
</main>

<!-- Right application window -->
<section class="absolute inset-y-0 right-0 left-[952px] flex flex-col border-l border-[#4b5763] bg-linear-to-b from-[#f4f8fc] via-[#e9f5f7] to-[#f4f7fa] pl-[6px]">
  <header class="flex h-6 shrink-0 items-center gap-[5px] pb-1 pl-[2px]">
    <svg class="size-4 shrink-0"><use href="#i-app"/></svg>
    <h2 class="whitespace-nowrap leading-4">CAD快速看图 - D:\微信文件\WeChat Files\wxid_f9sv7f5pnwad21\FileStorage\File\2021-08\武翟山围墙施工图.dwg--只读</h2>
  </header>
  <div class="flex min-h-0 flex-1 flex-col border-t border-l border-[#65717c] bg-[#f0f0f0]">
    <nav data-toolbar="right" class="flex h-[54px] shrink-0 items-start overflow-hidden bg-linear-to-b from-[#f1f0eb] to-[#ebe4e2] pl-px pt-0.5"></nav>
    <div role="tablist" class="flex h-6 shrink-0 pl-0.5">
      <button role="tab" aria-selected="true" class="flex w-[158px] items-center border border-[#517db3] bg-linear-to-b from-[#bed0e7] to-[#dde7f4] pr-2 pl-1">
        <svg class="h-4 w-3.5" viewBox="0 0 14 16"><path d="M3.500 8V5a3.500 3.500 0 0 1 7 0v3" fill="none" stroke="#999" stroke-width="1.500"/><rect x="1" y="7" width="12" height="9" rx="1" fill="#e5a62c"/><path d="M1 10h12M1 13h12" stroke="#f8d77d"/></svg>
        <span class="flex-1 pl-2 text-[13px] font-bold">武翟山围墙施工图</span><span class="text-sm text-gray-600">×</span></button>
    </div>
    <div class="min-h-0 flex-1 overflow-hidden bg-black">
<svg id="wall" class="h-[782px] w-[743px]" viewBox="960 103 743 782" fill="none" shape-rendering="crispEdges">
<defs><pattern id="hatch" width="9" height="9" patternUnits="userSpaceOnUse"><path d="M0 9 9 0M-2 2 2-2M7 11 11 7" stroke="#fff" stroke-width="4"/></pattern></defs>
<g transform="translate(1090 350) scale(.333333)" stroke-width="3">
 <path stroke="#0ff" d="M43 28H1181V832H43ZM139 46H1163V815H139ZM478 210V242M478 270V300M478 518V575"/>
 <path fill="url(#hatch)" stroke="#fff" d="M463 308H491V480H463Z"/>
 <path stroke="#0ff" stroke-dasharray="22 9" d="M478 300V480"/>
 <path stroke="#fff" d="M457 298H497V308H457ZM423 442H463M491 442H525M438 286H476M487 502V489H542M510 508H551M510 520 522 526H575"/>
 <path stroke="#f00" stroke-width="4" d="M460 303H495M456 502H500"/>
 <path stroke="#d2ac65" d="M454 504V481H500V504"/><path stroke="#d2ac65" fill="url(#hatch)" d="M442 504H512V517H442Z"/>
 <path stroke="#0f0" d="M391 298V517M384 298H429M402 307H429M412 295V311M381 442H417M381 481H411M384 505H411M384 517H411M453 257H500M457 252V264M463 252V266M491 252V266M497 252V264M442 538H512M442 528V546M454 528V546M478 528V546M500 528V546M512 528V546"/>
 <path stroke="#0f0" stroke-width="6" d="M318 645H633"/>
</g>
</svg>
    </div>
  </div>
</section>

<script>
const tools = [['open','打开'],['recent','最近打开'],['cloudp','快看云盘'],['win','窗口'],['layer','图层管理'],0,['undo','撤销'],['redo','恢复'],['vip','会员'],['measure','测量'],['stat','测量统计'],0,['cmp','图纸对比'],0,['edit','编辑助手'],0,['shape','图形识别'],['text','文字']];
document.querySelectorAll('[data-toolbar]').forEach(bar => {
  const left = bar.dataset.toolbar === 'left';
  bar.innerHTML = tools.map(t => {
    if (!t) return '<span class="mx-[2px] mt-[3px] h-11 w-0.5 shrink-0 border-r border-[#cfcfcf]"></span>';
    const on = left && (t[0] === 'cloudp' || t[0] === 'measure');
    const size = t[1].length > 2 ? 'w-[69px]' : 'w-[45px]';
    const tone = t[0] === 'vip' ? 'text-[#b8862b]' : /do$/.test(t[0]) ? 'text-[#8a8a8a]' : 'text-black';
    const box = on ? 'border-[#7ea4ee] bg-[#ecf2fc]' : 'border-transparent';
    return `<button class="flex h-[49px] shrink-0 flex-col items-center gap-0.5 rounded border pt-[3px] ${size} ${tone} ${box}"><svg class="size-6"><use href="#i-${t[0]}"/></svg><span class="leading-4">${t[1]}</span></button>`;
  }).join('') + (left ? '<button aria-label="更多" class="ml-auto mt-3 pr-1 text-base font-bold">»</button>' : '');
});

document.getElementById('projects').innerHTML = [['安装图例',9,'2020-02-11 18:05:22'],['电厂',28,'2018-07-15 18:59:39'],['科创园',14,'2019-12-18 10:52:19'],['满硐',12,'2020-12-23 11:20:07'],['阳光四季城',12,'2021-07-27 16:22:57']].map(p => `
  <li class="flex h-[65px] items-center border-b border-[#cbcbcb] pl-[9px] pr-4">
    <svg class="size-8 shrink-0"><use href="#i-proj"/></svg>
    <div class="ml-[11px] flex-1"><h3 class="text-base leading-5">${p[0]}</h3>
      <div class="flex h-5 items-center text-[13px]"><svg class="h-[14px] w-4"><use href="#i-people"/></svg><span class="ml-0.5 w-10">1</span><svg class="size-4"><use href="#i-docs"/></svg><span class="ml-0.5">${p[1]}</span></div>
      <time class="block text-xs leading-4 text-[#858585]">${p[2]}</time></div>
    <a href="#" class="mr-[18px] mt-1 text-[#0000f0] underline">升级</a>
    <button aria-label="打开项目" class="flex size-7 items-center justify-center rounded-sm border border-[#707070] bg-linear-to-b from-[#f3f3f3] to-[#d0d0d0]"><svg class="h-[18px] w-5"><use href="#i-folder"/></svg></button>
  </li>`).join('');

// Drawing labels: "x y text", "|" separated; coordinates in thirds of a pixel from the block origin.
const NS = 'http://www.w3.org/2000/svg';
function labels(id, ox, oy, fill, size, data, mode) {
  const g = document.createElementNS(NS, 'g');
  g.setAttribute('transform', `translate(${ox} ${oy}) scale(.333333)`);
  g.setAttribute('fill', fill);
  g.setAttribute('font-size', size);
  g.setAttribute('font-weight', size < 24 ? 700 : 400);
  g.setAttribute('font-family', "'Liberation Sans Narrow','Liberation Sans','Noto Sans CJK SC',sans-serif");
  if (mode !== 'start') g.setAttribute('text-anchor', 'middle');
  data.split('|').forEach(s => {
    const m = s.match(/^(\d+) (\d+) (.*)$/);
    const t = document.createElementNS(NS, 'text');
    t.setAttribute('x', m[1]); t.setAttribute('y', +m[2] + Math.round(size * .36));
    if (mode === 'v') t.setAttribute('transform', `rotate(-90 ${m[1]} ${m[2]})`);
    t.textContent = m[3];
    g.appendChild(t);
  });
  document.getElementById(id).appendChild(g);
}
const W = '#fff', M = '#f0f', P = 'plan';
labels(P,320,120,W,36,'380 100 1|455 100 2|658 100 3|775 100 5|989 100 7|1162 100 9|97 606 F|97 736 E|97 931 D|97 1184 C|97 1295 B|97 1535 A|380 1876 1|455 1876 2|682 1876 4|865 1876 6|1075 1876 8');
labels(P,320,120,W,27,'1357 100 11|1474 100 12|1666 100 14|1285 1876 10|1531 1876 13|621 568 1|621 1899 1');
labels(P,320,120,W,15,'347 202 350|417 202 1200|553 202 3300|713 202 1900|881 202 3500|1075 202 2800|1259 202 2800|1415 202 1900|1570 202 3100|1568 153 45200|416 250 1200|465 250 500|539 250 1800|625 250 1000|668 250 400|711 250 1000|757 250 500|790 250 600|840 250 1000|877 233 300|936 250 1100|990 250 100|1028 250 1100|1072 233 250|1118 250 1350|1203 250 1400|1250 250 250|1290 250 1000|1339 250 600|1370 233 400|1412 250 1000|1459 233 500|1492 250 560|1563 250 1800|1643 250 750|1672 233 250|1182 508 1500|1238 508 300');
labels(P,320,120,W,20,'540 478 楼梯详图 1|571 519 详建施|628 484 4|628 512 J5|770 478 窗檐板 上檐线|857 478 600|767 512 尺22户外用|750 598 防水门坎高80mm|594 632 YL-1');
labels(P,320,120,M,18,'540 758 C0814|713 758 C1014|842 792 C1016');
labels(P,320,120,W,16,'199 573 300|199 670 1200|199 835 1375|199 1060 3180|199 1240 1800|199 1417 3375|199 1570 150|149 1078 15750|824 765 2100|247 905 600|247 938 100|247 1037 2200|247 1160 700|247 1205 420|247 1250 800|247 1318 350|856 650 3RAP','v');
labels(P,600,120,W,20,'371 332 室外地坪|353 363 -0.300|571 504 雨篷坡度|590 542 详做|672 588 Φ113.6|606 630 90防护做法(南侧)|733 596 26|733 620 64|796 674 顶板高|782 704 0.080|490 745 YL-2|88 674 -0.150|92 736 电表间|201 681 下|307 692 门厅|281 731 -0.150');
labels(P,600,120,M,18,'690 515 7|687 543 6|765 508 构件详图|755 550 详建施|189 582 C1414|347 625 DYM1526');
labels(P,600,120,W,16,'199 502 1950|255 513 1.20|455 615 350|455 688 1800|455 770 350|720 778 1100|17 650 3RAP','v');
labels(P,600,120,M,18,'256 646 FM1521|391 685 C1721','v');
labels(P,320,370,W,20,'542 70 主卧|706 55 卫生|555 354 客厅|760 275 餐厅|686 348 E1户型|408 270 阳台|540 503 卫生间|552 580 主卧|717 568 书房|855 145 厨房|349 508 0.000|360 478 雨篷板|779 808 YL-1|868 853 位置见J5-1');
labels(P,320,370,W,17,'840 823 1 空调百叶详做法(本页)','start');
labels(P,320,370,W,15,'600 211 1010|645 211 560|694 211 1400|535 391 2100|650 391 1050|771 391 3600|832 523 1200|707 633 900|791 633 1450|886 633 350');
labels(P,320,370,W,16,'199 85 1375|489 165 300|489 290 2300|489 405 300|824 250 800|824 310 350|824 360 1600|824 420 350|824 470 750|824 600 1350|824 740 1500|787 725 600|787 770 300|514 808 100|856 88 700','v');
labels(P,320,370,M,18,'540 10 C0814|713 10 C1014|416 200 YTC0617|416 377 YTC0617|571 769 C2417|826 675 MLC0921|289 586 构件详图|275 626 详建施|217 592 1|216 620 24|698 96 M0821|811 160 M0821|829 498 M0921');
labels(P,320,370,M,18,'352 285 YTC2222|437 285 TLM2721|636 138 M0921|705 470 M0921|603 503 M0821|478 497 C0814|883 265 FM0821|883 370 FM1021|883 470 M0921','v');
labels(P,320,370,'#00f',20,'870 732 空调板');
labels(P,600,370,W,20,'65 140 厨房|415 148 厨房|586 112 卫生|747 142 主卧|565 335 餐厅|659 326 书房|79 340 电梯厅|352 362 电梯厅|237 335 消防电梯|233 378 无障电梯|201 230 上|237 240 ±0.000|137 572 卧室|322 572 卧室|565 450 C1户型|753 632 主卧|823 472 卫生间|631 817 YL-2');
labels(P,600,370,W,15,'170 448 1800|300 448 1800|65 499 1200|136 499 1650|202 499 1400|267 499 1350|333 499 1000|405 499 1200|366 322 1150|46 633 350|123 633 1800|207 633 850|261 633 850|344 633 1800|423 633 350|462 633 350|554 633 2100|660 633 1800|727 541 1700|841 541 2100');
labels(P,600,370,W,16,'95 215 300|95 253 700|95 288 350|119 315 500|119 366 1400|119 412 500|334 215 300|334 253 700|334 288 350|502 135 1200|502 250 800|502 310 350|502 355 1600|502 412 350|502 507 500|502 565 500x750|720 30 1100|720 178 1500|720 295 400|720 374 900|720 650 2100|283 90 400|283 153 800|255 155 1.20|313 724 800|313 780 350|558 724 800|558 770 300|502 738 400|472 815 200|119 462 600','v');
labels(P,600,370,M,18,'450 47 C0814|575 47 C1014|756 47 C2014|490 187 M0821|603 187 M0821|668 382 M0821|101 668 MLC1821|378 668 MLC1821|520 668 MLC1421|805 776 C2417');
labels(P,600,370,M,18,'44 262 FM0821|430 255 FM0821|44 370 FM1021|430 370 FM1021|44 470 M0921|468 470 M0921|653 238 M0921|680 438 M0921|775 472 M0821|853 315 C1421','v');
labels(P,600,370,'#00f',20,'31 732 空调板|439 732 空调板');
labels(P,320,640,W,20,'545 68 楼梯详图 2|582 108 详建施|640 74 10|640 102 26|1640 70 楼梯详图 2|1666 110 详建施');
labels(P,320,640,W,15,'360 142 150|412 142 950|446 124 100|473 142 850|567 142 2400|661 142 650|726 142 1500|818 142 1500|947 142 2700|1052 142 700|1096 142 600|1200 142 2100|1360 142 2300|1484 142 950|1550 142 600|1640 142 3400|346 190 350|415 190 1200|567 190 3700|773 190 3000|970 190 3600|1180 190 3600|1407 190 4100|1643 190 3700|1646 241 45200|660 84 200|730 84 1200|771 84 100|902 84 1800|1029 84 200|1075 84 1700|1116 84 200|1276 84 5400|1435 84 200|1481 84 1350|1550 84 700|777 114 100|1034 114 500|1121 114 500|1440 114 500|212 250 800');
labels(P,320,640,W,16,'122 95 550|122 153 1450','v');
labels(P,320,640,M,18,'262 140 C0814','v');
labels(P,320,640,W,20,'57 404 附注:|57 441 1.外墙砌体|193 441 300 厚CCM砌块填充墙保温墙体,详节能|687 441 100 ,外墙 200 。2 内墙为|955 441 200 ( 100 )厚砂加气砌块,墙体基础上部,做法见设计|60 478 具体厚度详平面标注|298 478 3.未注明门垛为|482 478 100(含面层),阳台(卫)门垛|803 478 200 砌块墙体。|978 478 4.卫生间排风道|1150 478 J1预留洞孔|1303 478 300 直径,中心距地|57 515 见门窗表和大样图。|282 515 5.电施工预留孔洞,配合安装图施工,留洞位置尺寸详图,防止打凿墙体。管井封堵详|1100 515 待管道安装后封堵,详见建筑设计说明|57 551 施工时应核对土建与设备图纸,无误后方可施工。|677 551 6.外窗台高度均为|875 551 15mm ,详做法|1043 551 7.阳台,雨篷、厨卫完成面标高低室内|1422 551 20 ,详见|57 588 015图集。|190 588 8.内墙留洞尺|336 588 900 宽,空调板位置,由建设单位确定|780 588 100mm ,管道预留|992 588 900 ,两台分体空调孔|1210 588 100 ,详节能|1373 588 1800mm 。|57 626 此图需配合结构图及设备图使用。|458 626 9.上人屋面活荷载标准值,楼梯荷载|837 626 1.5kN / m²,阳台荷载|1067 626 1.2 kN/m ,栏杆高≥ 110 。|57 663 10.空调,设置室外机位板,冷凝水集中|489 663 2.5厚钢板,防腐处理|716 663 3厚PVC管件,上翻|902 663 2%,坡度向地漏找坡,所有管道穿楼板处均做防水套管详图|57 699 采用隔声|155 699 10 PVC 套管,填充密封|420 699 200 防水涂料|588 699 2260 塑料排水管,详图集做法|985 699 50PVC 排水管,坡向地漏|1262 699 113J6-22 页。','start');
labels(P,320,640,W,24,'1608 474 一层平面|1590 552 本层建筑|1590 602 总建筑面|1590 656 地上建筑|1590 706 地下建筑','start');
labels('wall',1090,350,W,12,'438 244 60|470 244 240|508 244 60|486 266 120|403 285 60|402 512 100|445 527 100|467 527 120|488 527 120|512 527 100|457 280 压顶板');
labels('wall',1090,350,W,12,'381 371 2250|381 458 600|381 493 360','v');
labels('wall',1090,350,W,13,'618 381 注:做法说明|633 401 1.砖墙采用M5水泥砂浆砌筑MU10。|633 420 2.每隔3m设构造柱|633 439 3.基础埋深-1.2素土夯实|645 457 垫层采用混凝土|633 475 4.伸缩缝间距30m|512 484 防潮层|518 502 砖基础|530 519 C15垫层','start');
labels('wall',1090,350,W,25,'343 624 1.5');
labels('wall',1090,350,W,18,'378 624 2米围墙剖面','start');
labels('wall',1090,350,W,18,'605 627 1:30');
</script>
</body>
</html>
